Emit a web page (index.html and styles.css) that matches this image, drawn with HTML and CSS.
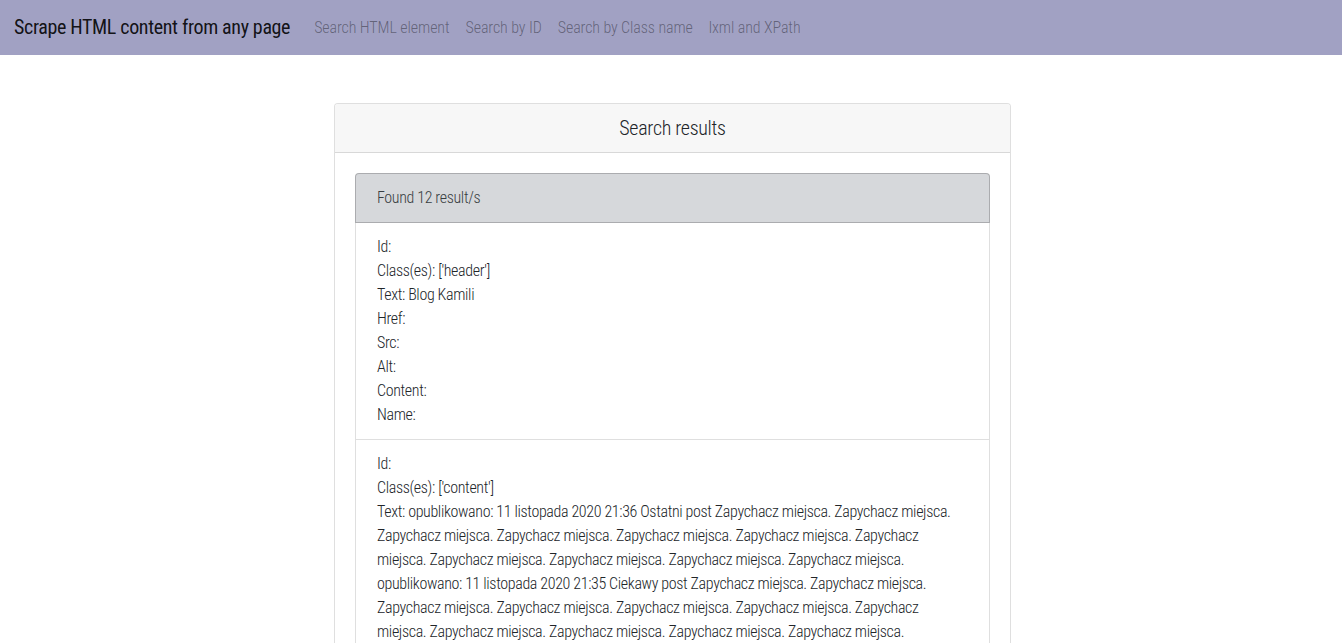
FILE: index.html
```html
<!DOCTYPE html>
<html lang="en">
<head>
<meta charset="utf-8">
<title>Search results</title>
<link rel="stylesheet" href="styles.css">
</head>
<body>
<nav class="navbar">
  <a class="brand" href="#">Scrape HTML content from any page</a>
  <ul class="nav">
    <li><a class="nav-link" href="#">Search HTML element</a></li>
    <li><a class="nav-link" href="#">Search by ID</a></li>
    <li><a class="nav-link" href="#">Search by Class name</a></li>
    <li><a class="nav-link" href="#">lxml and XPath</a></li>
  </ul>
</nav>
<main class="page">
  <section class="card">
    <div class="card-header"><h5 class="card-title">Search results</h5></div>
    <div class="card-body">
      <ul class="list">
        <li class="item item-head">Found 12 result/s</li>
        <li class="item">
          <div>Id:</div>
          <div>Class(es): ['header']</div>
          <div>Text: Blog Kamili</div>
          <div>Href:</div>
          <div>Src:</div>
          <div>Alt:</div>
          <div>Content:</div>
          <div>Name:</div>
        </li>
        <li class="item">
          <div>Id:</div>
          <div>Class(es): ['content']</div>
          <div>Text: opublikowano: 11 listopada 2020 21:36 Ostatni post Zapychacz miejsca. Zapychacz miejsca. Zapychacz miejsca. Zapychacz miejsca. Zapychacz miejsca. Zapychacz miejsca. Zapychacz miejsca. Zapychacz miejsca. Zapychacz miejsca. Zapychacz miejsca. Zapychacz miejsca. opublikowano: 11 listopada 2020 21:35 Ciekawy post Zapychacz miejsca. Zapychacz miejsca. Zapychacz miejsca. Zapychacz miejsca. Zapychacz miejsca. Zapychacz miejsca. Zapychacz miejsca. Zapychacz miejsca. Zapychacz miejsca. Zapychacz miejsca. Zapychacz miejsca. opublikowano: 11 listopada 2020 21:34 Pierwszy post Zapychacz miejsca. Zapychacz miejsca. Zapychacz miejsca. Zapychacz miejsca. Zapychacz miejsca. Zapychacz miejsca. Zapychacz miejsca. Zapychacz miejsca. Zapychacz miejsca. Zapychacz miejsca. Zapychacz miejsca.</div>
          <div>Href:</div>
          <div>Src:</div>
          <div>Alt:</div>
          <div>Content:</div>
          <div>Name:</div>
        </li>
        <li class="item">
          <div>Id:</div>
          <div>Class(es): ['footer']</div>
          <div>Text: Kamila 2020</div>
          <div>Href:</div>
          <div>Src:</div>
          <div>Alt:</div>
          <div>Content:</div>
          <div>Name:</div>
        </li>
      </ul>
    </div>
  </section>
</main>
</body>
</html>
```
FILE: styles.css
```css
html, body {
  margin: 0;
  padding: 0;
  overflow: hidden;
}
body {
  font-family: "Roboto", "Open Sans", sans-serif;
  font-weight: 300;
  font-stretch: condensed;
  letter-spacing: -0.35px;
  font-size: 16px;
  line-height: 24px;
  color: #212529;
  background: #fff;
}
a { text-decoration: none; }

.navbar {
  display: flex;
  align-items: center;
  height: 55px;
  padding: 0 16px 0 14px;
  background: #a1a1c3;
}
.brand {
  font-size: 20px;
  font-weight: 400;
  letter-spacing: -0.35px;
  color: rgba(0, 0, 0, 0.9);
  margin-right: 16px;
  line-height: 30px;
  margin-top: -1px;
}
.nav {
  display: flex;
  list-style: none;
  margin: 0;
  padding: 0;
}
.nav-link {
  display: block;
  padding: 8px;
  color: rgba(0, 0, 0, 0.4);
  font-size: 16px;
  letter-spacing: -0.1px;
}

.page {
  padding: 48px 0 0 3px;
}
.card {
  width: 675px;
  margin: 0 auto;
  border: 1px solid rgba(0, 0, 0, 0.125);
  border-radius: 4px;
  background: #fff;
}
.card-header {
  background: #f7f7f7;
  border-bottom: 1px solid rgba(0, 0, 0, 0.125);
  padding: 12px 20px;
  border-radius: 3px 3px 0 0;
  text-align: center;
}
.card-title {
  margin: 0;
  font-size: 20px;
  font-weight: 300;
  line-height: 24px;
  letter-spacing: -0.3px;
}
.card-body {
  padding: 20px;
}
.list {
  list-style: none;
  margin: 0;
  padding: 0;
}
.item {
  padding: 12px 20px 12px 21px;
  border: 1px solid rgba(0, 0, 0, 0.125);
  border-top-width: 0;
}
.item-head {
  border-top-width: 1px;
  border-color: rgba(0, 0, 0, 0.2);
  border-radius: 4px 4px 0 0;
  background: #d6d8db;
  color: #383d41;
}
```
